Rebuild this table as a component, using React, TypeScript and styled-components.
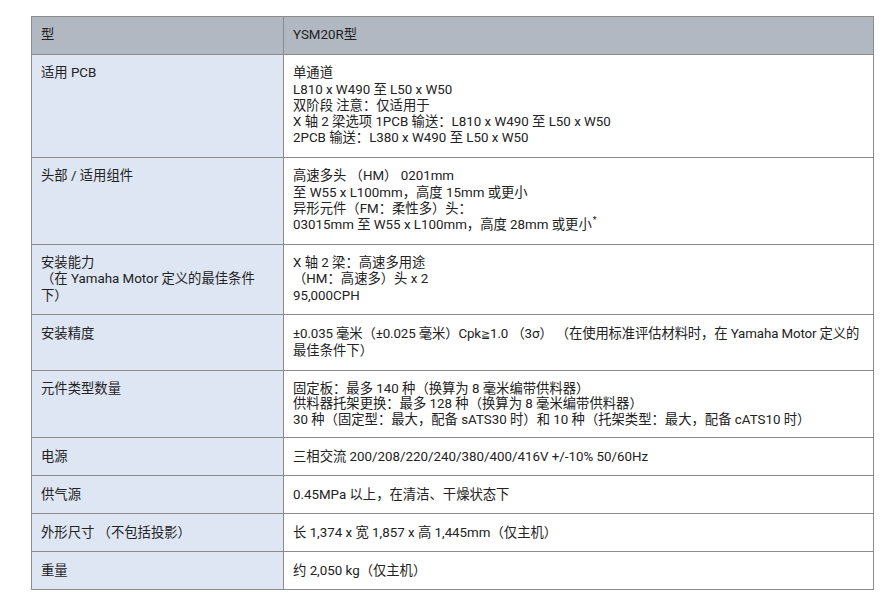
import React from 'react';
import styled, { createGlobalStyle } from 'styled-components';

const GlobalStyle = createGlobalStyle`
  html, body {
    margin: 0;
    padding: 0;
    background: #ffffff;
  }
  body {
    font-family: Roboto, "Noto Sans CJK SC", sans-serif;
    color: #222222;
  }
`;

const Page = styled.div`
  padding: 16px 0 0 31px;
`;

const SpecTable = styled.table`
  width: 843px;
  border-collapse: collapse;
  table-layout: fixed;
  font-size: 13.33px;
  line-height: 16.25px;
`;

const LabelCol = styled.col`
  width: 252px;
`;

const Cell = styled.td<{ $head?: boolean; $label?: boolean; $tight?: boolean }>`
  border: 1px solid #8c8c8c;
  padding: 10.4px 9px;
  vertical-align: top;
  text-align: left;
  font-weight: normal;
  line-height: ${(p) => (p.$tight ? '15.3px' : '16.25px')};
  background: ${(p) => (p.$head ? '#b1b8c2' : p.$label ? '#dfe6f3' : '#ffffff')};
`;

const Sup = styled.span`
  display: inline-block;
  font-size: 9px;
  line-height: 1;
  transform: translateY(-6px);
  margin-left: 1px;
`;

// narrow math sign as in the source page, and a slightly tighter long line
const Symbol = styled.span`
  font-family: "DejaVu Sans", sans-serif;
  font-size: 11px;
`;

const Tight = styled.span`
  letter-spacing: -0.12px;
`;

interface Row {
  label: React.ReactNode;
  value: React.ReactNode;
  tight?: boolean;
}

const rows: Row[] = [
  {
    label: '适用 PCB',
    value: (
      <>
        单通道<br />
        L810 x W490 至 L50 x W50<br />
        双阶段 注意：仅适用于<br />
        X 轴 2 梁选项 1PCB 输送：L810 x W490 至 L50 x W50<br />
        2PCB 输送：L380 x W490 至 L50 x W50
      </>
    ),
  },
  {
    label: '头部 / 适用组件',
    value: (
      <>
        高速多头 （HM） 0201mm<br />
        至 W55 x L100mm，高度 15mm 或更小<br />
        异形元件（FM：柔性多）头：<br />
        03015mm 至 W55 x L100mm，高度 28mm 或更小<Sup>*</Sup>
      </>
    ),
  },
  {
    label: (
      <>
        安装能力<br />
        （在 Yamaha Motor 定义的最佳条件<br />
        下）
      </>
    ),
    value: (
      <>
        X 轴 2 梁：高速多用途<br />
        （HM：高速多）头 x 2<br />
        95,000CPH
      </>
    ),
  },
  {
    label: '安装精度',
    value: (
      <>
        <Tight>
          ±0.035 毫米（±0.025 毫米）Cpk<Symbol>≧</Symbol>1.0 （3σ） （在使用标准评估材料时，在 Yamaha Motor 定义的
        </Tight>
        <br />
        最佳条件下）
      </>
    ),
  },
  {
    label: '元件类型数量',
    tight: true,
    value: (
      <>
        固定板：最多 140 种（换算为 8 毫米编带供料器）<br />
        供料器托架更换：最多 128 种（换算为 8 毫米编带供料器）<br />
        30 种（固定型：最大，配备 sATS30 时）和 10 种（托架类型：最大，配备 cATS10 时）
      </>
    ),
  },
  { label: '电源', value: '三相交流 200/208/220/240/380/400/416V +/-10% 50/60Hz' },
  { label: '供气源', value: '0.45MPa 以上，在清洁、干燥状态下' },
  { label: '外形尺寸 （不包括投影）', value: '长 1,374 x 宽 1,857 x 高 1,445mm（仅主机）' },
  { label: '重量', value: '约 2,050 kg（仅主机）' },
];

const App = (): React.ReactElement => {
  return (
    <>
      <GlobalStyle />
      <Page>
        <SpecTable>
          <colgroup>
            <LabelCol />
            <col />
          </colgroup>
          <thead>
            <tr>
              <Cell as="th" $head>型</Cell>
              <Cell as="th" $head>YSM20R型</Cell>
            </tr>
          </thead>
          <tbody>
            {rows.map((row, idx) => (
              <tr key={idx}>
                <Cell $label>{row.label}</Cell>
                <Cell $tight={row.tight}>{row.value}</Cell>
              </tr>
            ))}
          </tbody>
        </SpecTable>
      </Page>
    </>
  );
};

export default App;
